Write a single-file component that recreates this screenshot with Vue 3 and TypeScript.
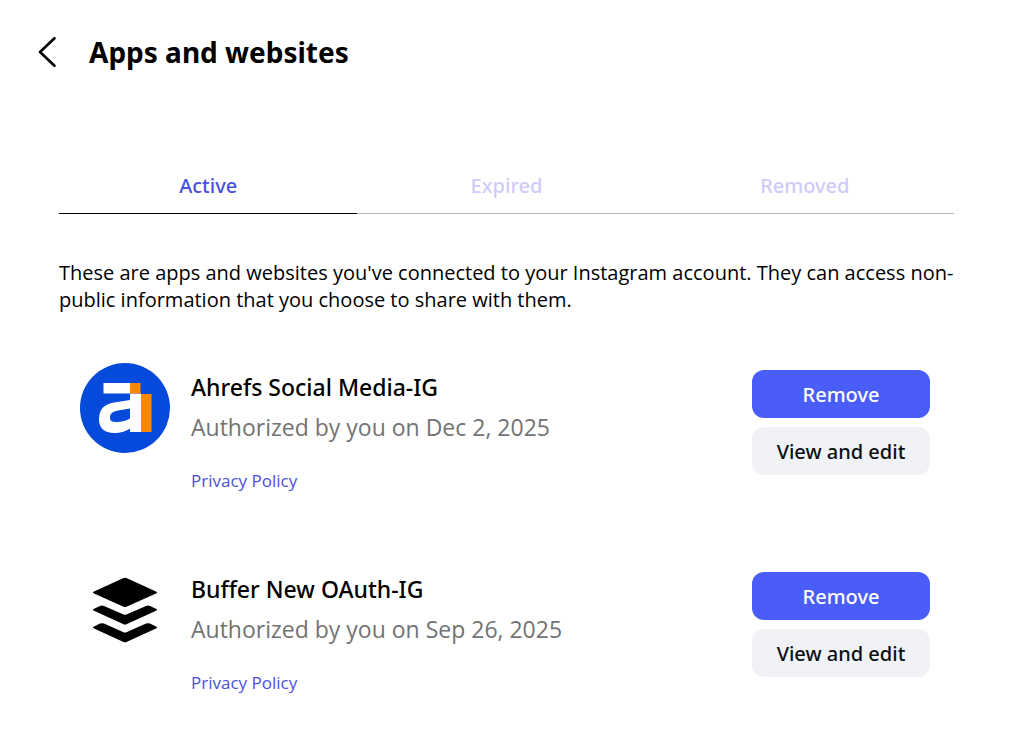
<script setup lang="ts">
import { ref } from 'vue'

interface ConnectedApp {
  id: 'ahrefs' | 'buffer'
  name: string
  date: string
}

const tabs: string[] = ['Active', 'Expired', 'Removed']
const activeTab = ref<string>('Active')

const apps: ConnectedApp[] = [
  { id: 'ahrefs', name: 'Ahrefs Social Media-IG', date: 'Dec 2, 2025' },
  { id: 'buffer', name: 'Buffer New OAuth-IG', date: 'Sep 26, 2025' },
]
</script>

<template>
  <div class="page">
    <header class="header">
      <button class="back" type="button" aria-label="Back">
        <svg width="20" height="32" viewBox="0 0 20 32" aria-hidden="true">
          <path d="M17.500 2.200 3 16l14.500 13.800" fill="none" stroke="#000" stroke-width="2.600" stroke-linecap="round" stroke-linejoin="round" />
        </svg>
      </button>
      <h1>Apps and websites</h1>
    </header>

    <main class="content">
      <div class="tabs" role="tablist">
        <button
          v-for="tab in tabs"
          :key="tab"
          class="tab"
          :class="{ active: tab === activeTab }"
          type="button"
          role="tab"
          :aria-selected="tab === activeTab"
          @click="activeTab = tab"
        >{{ tab }}</button>
      </div>

      <p class="intro">These are apps and websites you've connected to your Instagram account. They can access non-public information that you choose to share with them.</p>

      <ul class="apps">
        <li v-for="app in apps" :key="app.id" class="app">
          <svg v-if="app.id === 'ahrefs'" class="logo" viewBox="0 0 90 90" aria-hidden="true">
            <circle cx="45" cy="45" r="45" fill="#054ada" />
            <path d="M23.500 20H50v10.500h11V69H50v-3.500C46.500 68 41 70 34 70 24.500 70 19 65 19 56.500 19 46 24 41.500 34 39.500L50 37V30.500H23.500Z" fill="#fff" />
            <path d="M50 45.500 38 47.500C32.500 48.500 30 50.500 30 54.500S32.500 59 37 59C42 59 46.500 57.500 50 55.500Z" fill="#054ada" />
            <path d="M50 20h10.500v11h11v38H61V30.500H50Z" fill="#ff8800" />
          </svg>
          <svg v-else class="logo" viewBox="0 0 90 90" aria-hidden="true">
            <path d="M43 13.200q2-1 4 0l29 13.300q2 1 0 2L47 41.600q-2 1-4 0L14 28.500q-2-1 0-2Z" />
            <path d="M14 43.700l6-2.800q2-.8 4 0l19 8.400q2 1 4 0l19-8.400q2-.8 4 0l6 2.800q2 1 0 2L47 59q-2 1-4 0L14 45.700q-2-1 0-2Z" />
            <path d="M14 61.400l6-2.800q2-.8 4 0l19 8.400q2 1 4 0l19-8.400q2-.8 4 0l6 2.800q2 1 0 2L47 76.700q-2 1-4 0L14 63.400q-2-1 0-2Z" />
          </svg>
          <div class="details">
            <h2>{{ app.name }}</h2>
            <p class="date">Authorized by you on {{ app.date }}</p>
            <a href="#">Privacy Policy</a>
          </div>
          <div class="actions">
            <button class="action primary" type="button">Remove</button>
            <button class="action" type="button">View and edit</button>
          </div>
        </li>
      </ul>
    </main>
  </div>
</template>

<style>
body {
  margin: 0;
  background: #fff;
}
</style>

<style scoped>
.page {
  font-family: "Segoe UI", "Noto Sans", "Open Sans", sans-serif;
  color: #000;
}
button {
  font-family: inherit;
  border: 0;
  cursor: pointer;
}
.header {
  display: flex;
  align-items: center;
  gap: 32px;
  padding: 32px 37px 0;
}
.back {
  display: flex;
  padding: 0;
  background: none;
}
h1 {
  margin: 0;
  font-size: 28px;
  line-height: 40px;
  font-weight: 700;
}
.content {
  padding: 86px 68px 40px 59px;
}
.tabs {
  display: grid;
  grid-template-columns: repeat(3, 1fr);
}
.tab {
  padding: 14px 0 13px;
  border-bottom: 1px solid #b4b4b4;
  background: none;
  color: #cfcbf8;
  font-size: 20px;
  line-height: 28px;
  font-weight: 500;
}
.tab.active {
  border-color: #000;
  color: #4a50e0;
}
.intro {
  margin: 45px 0 0;
  font-family: "Segoe UI", "Open Sans", "Noto Sans", sans-serif;
  font-size: 20px;
  line-height: 27px;
}
.apps {
  margin: 50px 0 0;
  padding: 0 24px 0 21px;
  list-style: none;
  display: grid;
  gap: 68px;
}
.app {
  display: flex;
  align-items: flex-start;
}
.logo {
  flex: none;
  width: 90px;
  height: 90px;
}
.details {
  flex: 1;
  padding: 8px 0 0 21px;
}
h2 {
  margin: 0;
  font-size: 23px;
  line-height: 32px;
  font-weight: 500;
}
.date {
  margin: 8px 0 22px;
  color: #737373;
  font-family: "Segoe UI", "Open Sans", "Noto Sans", sans-serif;
  font-size: 23px;
  line-height: 32px;
}
a {
  display: block;
  color: #4a50e0;
  font-family: "Segoe UI", "Open Sans", "Noto Sans", sans-serif;
  font-size: 17px;
  line-height: 32px;
  text-decoration: none;
}
.actions {
  display: grid;
  gap: 9px;
  width: 178px;
  padding-top: 7px;
}
.action {
  height: 48px;
  padding: 0;
  border-radius: 12px;
  background: #f0f2f5;
  color: #0c1014;
  font-size: 20px;
  font-weight: 500;
}
.action.primary {
  background: #4a5df9;
  color: #fff;
}
</style>
